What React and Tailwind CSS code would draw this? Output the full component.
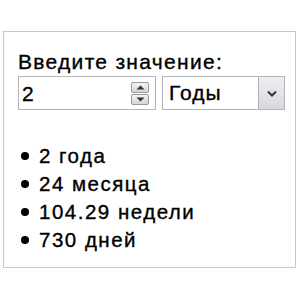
export default function App() {
  const items = ["2 года", "24 месяца", "104.29 недели", "730 дней"];
  return (
    <div className="w-[300px] h-[300px] bg-white pt-[31px] pl-[3px]" style={{ fontFamily: '"Liberation Sans", Arial, sans-serif' }}>
      <div className="w-[293px] h-[237px] border border-[#c8c8c8] pt-[18px] pl-[14px] [-webkit-text-stroke:0.35px_black]">
        <div className="text-[21px] leading-[23px] tracking-[1.3px] text-black">Введите значение:</div>
        <div className="flex gap-[6px] mt-[3px]">
          <div className="w-[138px] h-[34px] border border-[#b4b4b4] flex items-center pl-[3px] pr-[6px]">
            <span className="text-[21px] leading-[23px] text-black flex-1">2</span>
            <div className="w-[18px] h-[23px] flex flex-col gap-[1px] [-webkit-text-stroke:0]">
              <div className="flex-1 rounded-[2px] border border-[#9a9a9a] bg-gradient-to-b from-[#f4f4f4] to-[#d4d4d4] flex items-center justify-center">
                <svg width="9" height="5" viewBox="0 0 9 5"><path d="M0.5 4.5 L4.5 0.5 L8.5 4.5 Z" fill="#333" /></svg>
              </div>
              <div className="flex-1 rounded-[2px] border border-[#9a9a9a] bg-gradient-to-b from-[#f4f4f4] to-[#d4d4d4] flex items-center justify-center">
                <svg width="9" height="5" viewBox="0 0 9 5"><path d="M0.5 0.5 L4.5 4.5 L8.5 0.5 Z" fill="#333" /></svg>
              </div>
            </div>
          </div>
          <div className="w-[123px] h-[34px] border border-[#b4b4b4] flex items-stretch">
            <span className="flex-1 text-[21px] leading-[32px] tracking-[1px] text-black pl-[6px]">Годы</span>
            <div className="w-[26px] border-l border-[#b0b0b8] bg-gradient-to-b from-[#eeeef2] to-[#d8d8e0] flex items-center justify-center">
              <svg width="10" height="7" viewBox="0 0 10 7"><path d="M1 1.5 L5 5.5 L9 1.5" fill="none" stroke="#333" strokeWidth="2" /></svg>
            </div>
          </div>
        </div>
        <ul className="mt-[32px] pl-[3px]">
          {items.map((t) => (
            <li key={t} className="flex items-center h-[28px] text-[20.5px] tracking-[1.5px] text-black">
              <span className="w-[8px] h-[8px] rounded-full bg-black mr-[10px] shrink-0" />
              {t}
            </li>
          ))}
        </ul>
      </div>
    </div>
  );
}
